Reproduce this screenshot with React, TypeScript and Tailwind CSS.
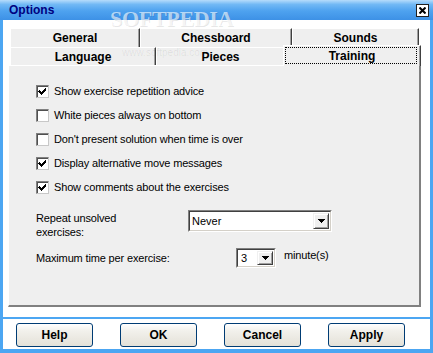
import React from "react";

function Check() {
  return (
    <svg width="9" height="9" viewBox="0 0 9 9" shapeRendering="crispEdges">
      <path d="M1 3 h1 v1 h1 v1 h1 v-1 h1 v-1 h1 v-1 h1 v-1 h1 v3 h-1 v1 h-1 v1 h-1 v1 h-1 v1 h-1 v-1 h-1 v-1 h-1 v-1 h-1 z" fill="#000" />
    </svg>
  );
}

function Checkbox({ checked, label }: { checked: boolean; label: string }) {
  return (
    <div className="h-[24px] flex items-center">
      <div className="w-[13px] h-[13px] border border-t-[#808080] border-l-[#808080] border-b-[#c8c8c8] border-r-[#c8c8c8] bg-white flex items-center justify-center shadow-[inset_1px_1px_0_#505050]">
        {checked && <Check />}
      </div>
      <span className="ml-[5px] text-[11px] tracking-[-0.15px] leading-none">{label}</span>
    </div>
  );
}

function Arrow() {
  return (
    <svg width="7" height="4" viewBox="0 0 7 4" shapeRendering="crispEdges">
      <polygon points="0,0 7,0 3.5,4" fill="#000" />
    </svg>
  );
}

function ArrowButton({ h }: { h: string }) {
  return (
    <div
      className={`w-[16px] ${h} bg-[#efefef] border border-t-[#f0f0f0] border-l-[#f0f0f0] border-b-[#404040] border-r-[#404040] shadow-[inset_1px_1px_0_#ffffff,inset_-1px_-1px_0_#a0a0a0] flex items-center justify-center`}
    >
      <Arrow />
    </div>
  );
}

function Tab({ label, w, h }: { label: string; w: string; h: string }) {
  return (
    <div
      className={`${w} ${h} shrink-0 bg-[#efefef] border-t border-l border-t-white border-l-white border-r border-r-[#404040] shadow-[inset_-1px_0_0_#a0a0a0] flex items-center justify-center text-[12px] font-bold leading-none`}
    >
      {label}
    </div>
  );
}

function Btn({ label }: { label: string }) {
  return (
    <div className="w-[77px] h-[24px] rounded-[3px] border border-[#003c74] bg-[linear-gradient(to_bottom,#ffffff,#f2f1ec_30%,#e4e1d8)] flex items-center justify-center text-[12px] font-bold leading-none">
      {label}
    </div>
  );
}

export default function App() {
  return (
    <div className="relative w-[433px] h-[353px] overflow-hidden bg-[#4ca6f2] flex flex-col font-['Liberation_Sans',Arial,sans-serif] text-black">
      {/* title bar */}
      <div className="h-[20px] shrink-0 flex items-center justify-between pl-[9px] pr-[4px] bg-[linear-gradient(to_bottom,#b6dcfb_0%,#72b9f5_22%,#4ea2ef_55%,#3d91e6_100%)]">
        <span className="text-[12px] font-bold text-[#000080] leading-none">Options</span>
        <div className="w-[13px] h-[13px] bg-white border border-[#202020] flex items-center justify-center">
          <svg width="7" height="7" viewBox="0 0 7 7">
            <path d="M0.5 0.5 L6.5 6.5 M6.5 0.5 L0.5 6.5" stroke="#000" strokeWidth="2" />
          </svg>
        </div>
      </div>

      {/* content area */}
      <div className="mx-[3px] h-[297px] shrink-0 bg-white pt-[8px] pl-[5px] pr-[9px] flex flex-col">
        {/* tabs */}
        <div className="pl-[2px] flex flex-col">
          <div className="flex h-[19px]">
            <Tab label="General" w="w-[130px]" h="h-[19px]" />
            <Tab label="Chessboard" w="w-[152px]" h="h-[19px]" />
            <Tab label="Sounds" w="w-[127px]" h="h-[19px]" />
          </div>
          <div className="flex h-[18px] items-start">
            <Tab label="Language" w="w-[146px]" h="h-[18px]" />
            <Tab label="Pieces" w="w-[129px]" h="h-[18px]" />
            <div className="relative z-10 -ml-[2px] -mt-[2px] w-[138px] h-[21px] shrink-0 bg-[#efefef] border-t border-l border-t-white border-l-white border-r border-r-[#404040] shadow-[inset_-1px_0_0_#a0a0a0] flex items-start justify-center">
              <div className="absolute left-[1px] right-[3px] top-[1px] h-[17px] border border-dotted border-black" />
              <span className="mt-[4px] text-[12px] font-bold leading-none">Training</span>
            </div>
          </div>
        </div>

        {/* panel */}
        <div className="h-[242px] shrink-0 bg-[#efefef] border-t border-l border-t-white border-l-white border-r-2 border-b-2 border-r-[#808080] border-b-[#808080] pt-[13px] pl-[27px] flex flex-col">
          <Checkbox checked label="Show exercise repetition advice" />
          <Checkbox checked={false} label="White pieces always on bottom" />
          <Checkbox checked={false} label="Don't present solution when time is over" />
          <Checkbox checked label="Display alternative move messages" />
          <Checkbox checked label="Show comments about the exercises" />

          <div className="mt-[11px] flex items-start">
            <div className="w-[152px] mt-[1px] text-[11px] tracking-[-0.15px] leading-[14px]">
              Repeat unsolved
              <br />
              exercises:
            </div>
            <div className="w-[144px] h-[22px] border border-t-[#808080] border-l-[#808080] border-b-white border-r-white">
              <div className="h-full border border-t-[#404040] border-l-[#404040] border-b-[#d4d0c8] border-r-[#d4d0c8] bg-white flex items-center justify-between pl-[2px] pr-[1px]">
                <span className="text-[11px] leading-none">Never</span>
                <ArrowButton h="h-[16px]" />
              </div>
            </div>
          </div>

          <div className="mt-[9px] h-[20px] flex items-center">
            <div className="w-[200px] text-[11px] tracking-[-0.15px] leading-none">Maximum time per exercise:</div>
            <div className="w-[40px] h-[20px] border border-t-[#808080] border-l-[#808080] border-b-white border-r-white">
              <div className="h-full border border-t-[#404040] border-l-[#404040] border-b-[#d4d0c8] border-r-[#d4d0c8] bg-white flex items-center justify-between pl-[3px] pr-[1px]">
                <span className="text-[11px] leading-none">3</span>
                <ArrowButton h="h-[14px]" />
              </div>
            </div>
            <span className="ml-[8px] mb-[6px] text-[11px] tracking-[-0.15px] leading-none">minute(s)</span>
          </div>
        </div>
      </div>

      {/* blue separator */}
      <div className="h-[2px] shrink-0" />

      {/* buttons */}
      <div className="mx-[3px] h-[30px] shrink-0 bg-white pl-[13px] pt-[4px] flex items-start gap-[27px]">
        <Btn label="Help" />
        <Btn label="OK" />
        <Btn label="Cancel" />
        <Btn label="Apply" />
      </div>

      {/* watermark */}
      <div className="pointer-events-none absolute left-[110px] top-[8px] text-[22px] font-bold tracking-[-0.3px] font-['Liberation_Serif',serif] text-white/60 [text-shadow:1px_1px_0_rgba(0,0,0,0.10)] leading-none">
        SOFTPEDIA
      </div>
      <div className="pointer-events-none absolute left-[122px] top-[48px] text-[10px] text-black/[0.08] leading-none">
        www.softpedia.com
      </div>
    </div>
  );
}
